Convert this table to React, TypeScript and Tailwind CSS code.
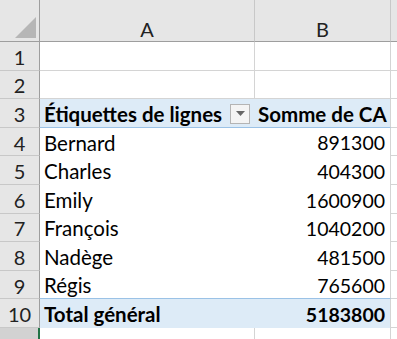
const rows: { name: string; value: string }[] = [
  { name: 'Bernard', value: '891300' },
  { name: 'Charles', value: '404300' },
  { name: 'Emily', value: '1600900' },
  { name: 'François', value: '1040200' },
  { name: 'Nadège', value: '481500' },
  { name: 'Régis', value: '765600' },
];

function RowHead({ n, selected }: { n?: number; selected?: boolean }) {
  return (
    <div
      className={`flex items-center justify-center pt-[2px] text-[20px] text-[#222] ${
        selected ? 'bg-[#d2d2d2] border-r-2 border-r-[#217346]' : 'bg-[#e6e6e6] border-r border-r-[#9e9e9e]'
      } border-b border-b-[#c8c8c8]`}
    >
      {n}
    </div>
  );
}

function FilterButton() {
  return (
    <div className="flex h-[20px] w-[20px] shrink-0 items-center justify-center border border-[#b4b4b4] bg-[#f4f4f4]">
      <svg width="9" height="5" viewBox="0 0 9 5">
        <path d="M0 0h9L4.5 5z" fill="#666" />
      </svg>
    </div>
  );
}

export default function App() {
  return (
    <div className="h-[339px] w-[397px] overflow-hidden bg-white font-['Lato',sans-serif] text-black">
      <div className="grid grid-cols-[40px_215px_136px_1fr] grid-rows-[42px_repeat(11,28.6px)]">
        {/* column headers */}
        <div className="relative bg-[#e6e6e6] border-r border-b border-[#9e9e9e]">
          <svg className="absolute right-[3px] bottom-[3px]" width="21" height="21" viewBox="0 0 21 21">
            <path d="M21 0V21H0z" fill="#b6b6b6" />
          </svg>
        </div>
        <div className="flex items-center justify-center pt-[16px] text-[20px] text-[#222] bg-[#e6e6e6] border-r border-r-[#c8c8c8] border-b border-b-[#9e9e9e]">
          A
        </div>
        <div className="flex items-center justify-center pt-[16px] text-[20px] text-[#222] bg-[#e6e6e6] border-r border-r-[#c8c8c8] border-b border-b-[#9e9e9e]">
          B
        </div>
        <div className="bg-[#e6e6e6] border-b border-b-[#9e9e9e]" />

        {/* rows 1 and 2 are empty */}
        {[1, 2].map((n) => (
          <div key={n} className="contents">
            <RowHead n={n} />
            <div className="border-r border-b border-[#d4d4d4]" />
            <div className="border-r border-b border-[#d4d4d4]" />
            <div className="border-b border-[#d4d4d4]" />
          </div>
        ))}

        {/* pivot header */}
        <RowHead n={3} />
        <div className="flex items-center justify-between bg-[#ddebf7] pl-[4px] pr-[5px] pt-[2px] text-[20.5px] font-bold border-b border-b-[#9bc2e6]">
          <span className="whitespace-nowrap">Étiquettes de lignes</span>
          <FilterButton />
        </div>
        <div className="flex items-center bg-[#ddebf7] pl-[3px] pt-[2px] text-[20.5px] font-bold whitespace-nowrap border-b border-b-[#9bc2e6] border-r border-r-[#d4d4d4]">
          Somme de CA
        </div>
        <div className="border-b border-[#d4d4d4]" />

        {/* pivot rows */}
        {rows.map((r, i) => (
          <div key={r.name} className="contents">
            <RowHead n={i + 4} />
            <div
              className={`flex items-center pl-[4px] pt-[2px] text-[20.5px] ${
                i === rows.length - 1 ? 'border-b border-b-[#9bc2e6]' : ''
              }`}
            >
              {r.name}
            </div>
            <div
              className={`flex items-center justify-end pr-[5px] pt-[2px] text-[19.5px] border-r border-r-[#d4d4d4] ${
                i === rows.length - 1 ? 'border-b border-b-[#9bc2e6]' : ''
              }`}
            >
              {r.value}
            </div>
            <div className="border-b border-[#d4d4d4]" />
          </div>
        ))}

        {/* grand total */}
        <RowHead n={10} />
        <div className="flex items-center bg-[#ddebf7] pl-[4px] pt-[2px] text-[20.5px] font-bold">Total général</div>
        <div className="flex items-center justify-end bg-[#ddebf7] pr-[5px] pt-[2px] text-[19.5px] font-bold border-r border-r-[#d4d4d4]">
          5183800
        </div>
        <div className="border-b border-[#d4d4d4]" />

        {/* row 11, selected */}
        <RowHead selected />
        <div className="border-r border-b border-[#d4d4d4]" />
        <div className="border-r border-b border-[#d4d4d4]" />
        <div className="border-b border-[#d4d4d4]" />
      </div>
    </div>
  );
}
